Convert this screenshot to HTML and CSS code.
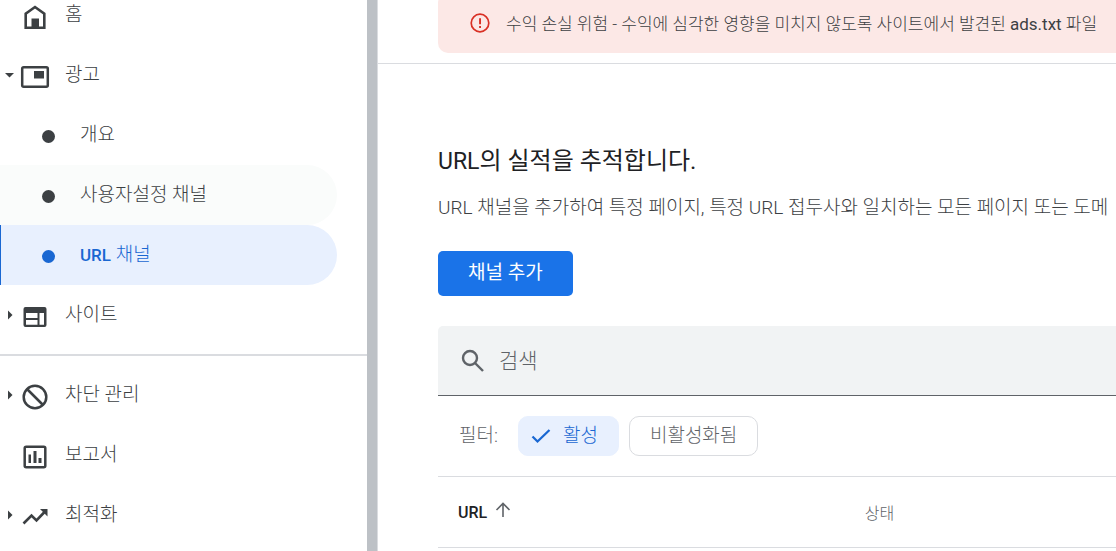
FILE: index.html
```html
<!DOCTYPE html>
<html lang="ko">
	<head>
		<meta charset="UTF-8">
		<meta name="viewport" content="width=device-width,initial-scale=1">
		<title>URL 채널</title>
		<link rel="stylesheet" href="styles.css">
	</head>
	<body>
		<div class="layout">
			<nav class="sidebar">
				<ul class="menu">
					<li>
						<a class="menu__link" href="#">
							<span class="menu__arrow"></span>
							<svg class="menu__icon" viewBox="0 0 30 30"><path d="M5.700 25.700V11.700L15 5l9.300 6.700v14z" fill="none" stroke="currentColor" stroke-width="2.600"/><path d="M11.500 16.500h7.500v9h-7.500z" fill="currentColor"/></svg>
							<span class="menu__text">홈</span>
						</a>
					</li>
					<li>
						<a class="menu__link" href="#">
							<svg class="menu__arrow" viewBox="0 0 10 10"><path d="M0 3h9L4.500 7.500z" fill="currentColor"/></svg>
							<svg class="menu__icon" viewBox="0 0 30 30"><rect x="2.200" y="5.200" width="25.600" height="19.600" rx="1.500" fill="none" stroke="currentColor" stroke-width="2.500"/><path d="M14 9h10v7.500H14z" fill="currentColor"/></svg>
							<span class="menu__text">광고</span>
						</a>
						<ul class="menu menu--sub">
							<li>
								<a class="menu__link menu__link--sub" href="#">
									<span class="menu__dot"></span>
									<span class="menu__text">개요</span>
								</a>
							</li>
							<li>
								<a class="menu__link menu__link--sub is-hover" href="#">
									<span class="menu__dot"></span>
									<span class="menu__text">사용자설정 채널</span>
								</a>
							</li>
							<li>
								<a class="menu__link menu__link--sub is-active" href="#" aria-current="page">
									<span class="menu__dot"></span>
									<span class="menu__text"><span class="menu__latin">URL</span> 채널</span>
								</a>
							</li>
						</ul>
					</li>
					<li>
						<a class="menu__link" href="#">
							<svg class="menu__arrow" viewBox="0 0 10 10"><path d="M3 .500L7.500 5 3 9.500z" fill="currentColor"/></svg>
							<svg class="menu__icon" viewBox="0 0 30 30"><path fill="currentColor" fill-rule="evenodd" d="M5.500 5h19A2 2 0 0 1 26.500 7v16a2 2 0 0 1-2 2h-19a2 2 0 0 1-2-2V7a2 2 0 0 1 2-2zM6 11v5h11.500v-5zM6 18v4.800h11.500V18zM19.500 11v11.800H24V11z"/></svg>
							<span class="menu__text">사이트</span>
						</a>
					</li>
				</ul>
				<hr class="divider">
				<ul class="menu">
					<li>
						<a class="menu__link" href="#">
							<svg class="menu__arrow" viewBox="0 0 10 10"><path d="M3 .500L7.500 5 3 9.500z" fill="currentColor"/></svg>
							<svg class="menu__icon" viewBox="0 0 30 30"><g fill="none" stroke="currentColor" stroke-width="2.500"><circle cx="15" cy="15" r="11.300"/><path d="M7 7l16 16"/></g></svg>
							<span class="menu__text">차단 관리</span>
						</a>
					</li>
					<li>
						<a class="menu__link" href="#">
							<span class="menu__arrow"></span>
							<svg class="menu__icon" viewBox="0 0 30 30"><rect x="4.700" y="4.700" width="20.600" height="20.600" rx="1.500" fill="none" stroke="currentColor" stroke-width="2.500"/><path d="M8.500 12.500H11V21H8.500zM13.500 9H16.500V21H13.500zM18.500 16H21.500V21H18.500z" fill="currentColor"/></svg>
							<span class="menu__text">보고서</span>
						</a>
					</li>
					<li>
						<a class="menu__link" href="#">
							<svg class="menu__arrow" viewBox="0 0 10 10"><path d="M3 .500L7.500 5 3 9.500z" fill="currentColor"/></svg>
							<svg class="menu__icon" viewBox="0 0 30 30"><path d="M3.500 21.500l8-8 5 5L25.500 9" fill="none" stroke="currentColor" stroke-width="2.600"/><path d="M20 7h7.500v7.500z" fill="currentColor"/></svg>
							<span class="menu__text">최적화</span>
						</a>
					</li>
				</ul>
			</nav>
			<div class="page">
				<header class="page-head">
					<div class="alert" role="alert">
						<svg class="alert__icon" viewBox="0 0 20 20"><circle cx="10" cy="10" r="8.800" fill="none" stroke="currentColor" stroke-width="1.700"/><path d="M9.100 5.200h1.900v6H9.100zM9.100 13h1.900v1.900H9.100z" fill="currentColor"/></svg>
						<span class="alert__text">수익 손실 위험 - 수익에 심각한 영향을 미치지 않도록 사이트에서 발견된 <span class="alert__file">ads.txt</span> 파일</span>
					</div>
				</header>
				<main class="content">
					<h1 class="title"><span class="title__latin">URL</span>의 실적을 추적합니다.</h1>
					<p class="lead">URL 채널을 추가하여 특정 페이지, 특정 URL 접두사와 일치하는 모든 페이지 또는 도메</p>
					<button class="button" type="button">채널 추가</button>
					<label class="search">
						<svg class="search__icon" viewBox="0 0 24 24" aria-hidden="true"><g fill="none" stroke="currentColor" stroke-width="2.400"><circle cx="9" cy="9" r="7"/><path d="M14 14l8 8"/></g></svg>
						<input class="search__input" type="search" placeholder="검색" aria-label="검색">
					</label>
					<div class="filter">
						<span class="filter__label">필터:</span>
						<button class="chip chip--on" type="button" aria-pressed="true">
							<svg class="chip__icon" viewBox="0 0 20 20"><path d="M1.500 10.500l5 5L18.500 4" fill="none" stroke="currentColor" stroke-width="2.300"/></svg>
							활성
						</button>
						<button class="chip" type="button" aria-pressed="false">비활성화됨</button>
					</div>
					<table class="table">
						<thead>
							<tr>
								<th class="table__head table__head--sorted" scope="col" aria-sort="ascending">
									URL
									<svg class="table__arrow" viewBox="0 0 16 16"><path d="M8 15V2M1.500 8L8 1.500 14.500 8" fill="none" stroke="currentColor" stroke-width="1.600"/></svg>
								</th>
								<th class="table__head" scope="col">상태</th>
							</tr>
						</thead>
					</table>
				</main>
			</div>
		</div>
	</body>
</html>
```
FILE: styles.css
```css
*
{
	box-sizing: border-box;
}

body
{
	margin: 0;
	overflow: hidden;
	background-color: #fff;
	color: #3c4043;
	font-family: Roboto, 'Noto Sans CJK KR', sans-serif;
	font-size: 19px;
	font-weight: 300;
}

button,
input
{
	font: inherit;
}

.layout
{
	display: flex;
	height: 100vh;
}

/* sidebar */
.sidebar
{
	flex: 0 0 378px;
	overflow: hidden;
	border-right: 1px solid #dadce0;
	box-shadow: inset -10px 0 #bdc1c6;
}

.menu
{
	margin: 0;
	padding: 0;
	list-style: none;
}

.sidebar > .menu:first-child
{
	margin-top: -15px;
}

.menu__link
{
	display: flex;
	align-items: center;
	height: 60px;
	margin-right: 40px;
	padding-left: 5px;
	border-radius: 0 30px 30px 0;
	color: #3c4043;
	text-decoration: none;
}

.menu__link--sub
{
	padding-left: 42px;
}

.menu__link.is-hover
{
	background-color: #fafcfb;
}

.menu__link.is-active
{
	border-left: 1px solid #1967d2;
	padding-left: 41px;
	background-color: #e8f0fe;
	color: #1967d2;
}

.menu__latin
{
	font-size: 17px;
	font-weight: 500;
}

.menu__arrow
{
	width: 10px;
	height: 10px;
}

.menu__icon
{
	width: 30px;
	height: 30px;
	margin: 3px 15px 0 5px;
}

.menu__dot
{
	width: 13px;
	height: 13px;
	margin: 3px 25px 0 0;
	border-radius: 50%;
	background-color: currentColor;
}

.menu__text
{
	line-height: 28px;
}

.divider
{
	height: 2px;
	margin: 9px 10px 9px 0;
	border: 0;
	background-color: #dadce0;
}

/* page */
.page
{
	flex: 1;
	min-width: 0;
	white-space: nowrap;
}

.page-head
{
	padding: 0 0 10px 60px;
	border-bottom: 1px solid #dadce0;
}

.alert
{
	display: flex;
	align-items: center;
	gap: 16px;
	height: 60px;
	margin-top: -7px;
	padding-left: 32px;
	overflow: hidden;
	border-radius: 10px 0 0 10px;
	background-color: #fce8e6;
	font-size: 17px;
}

.alert__icon
{
	flex: none;
	width: 20px;
	height: 20px;
	color: #d93025;
}

.alert__text
{
	padding-bottom: 2px;
}

.alert__file
{
	font-weight: 400;
}

.content
{
	padding: 80px 0 0 60px;
	overflow: hidden;
}

.title
{
	margin: 0;
	color: #202124;
	font-size: 24px;
	font-weight: 400;
	line-height: 34px;
}

.title__latin
{
	font-size: 23px;
}

.lead
{
	margin: 14px 0 28px;
	line-height: 30px;
}

.button
{
	display: block;
	height: 45px;
	padding: 0 30px 6px;
	border: 0;
	border-radius: 5px;
	background-color: #1a73e8;
	color: #fff;
	font-weight: 400;
}

.search
{
	display: flex;
	align-items: center;
	gap: 14px;
	height: 70px;
	margin-top: 30px;
	padding-left: 23px;
	border-bottom: 1px solid #5f6368;
	border-radius: 5px 0 0 0;
	background-color: #f1f3f4;
}

.search__icon
{
	width: 24px;
	height: 24px;
	color: #5f6368;
}

.search__input
{
	flex: 1;
	padding: 0;
	border: 0;
	outline: 0;
	background: none;
	font-size: 21px;
}

.search__input::placeholder
{
	color: #5f6368;
}

.filter
{
	display: flex;
	align-items: center;
	gap: 10px;
	height: 80px;
	padding-left: 21px;
	color: #5f6368;
}

.filter__label
{
	margin-right: 10px;
	padding-bottom: 6px;
}

.chip
{
	display: flex;
	align-items: center;
	gap: 12px;
	height: 40px;
	padding: 0 20px 6px;
	border: 1px solid #dadce0;
	border-radius: 10px;
	background-color: #fff;
	color: #5f6368;
}

.chip--on
{
	padding-left: 12px;
	border-color: #e8f0fe;
	background-color: #e8f0fe;
	color: #1967d2;
}

.chip__icon
{
	width: 20px;
	height: 20px;
	margin-top: 6px;
}

.table
{
	width: 100%;
	border-collapse: collapse;
	table-layout: fixed;
}

.table__head
{
	height: 71px;
	padding: 0 0 0 20px;
	border-top: 1px solid #dadce0;
	border-bottom: 1px solid #dadce0;
	color: #5f6368;
	font-size: 16px;
	font-weight: 300;
	text-align: left;
}

.table__head--sorted
{
	width: 60%;
	color: #202124;
	font-weight: 500;
}

.table__arrow
{
	width: 16px;
	height: 16px;
	margin-left: 4px;
	color: #5f6368;
}
```
